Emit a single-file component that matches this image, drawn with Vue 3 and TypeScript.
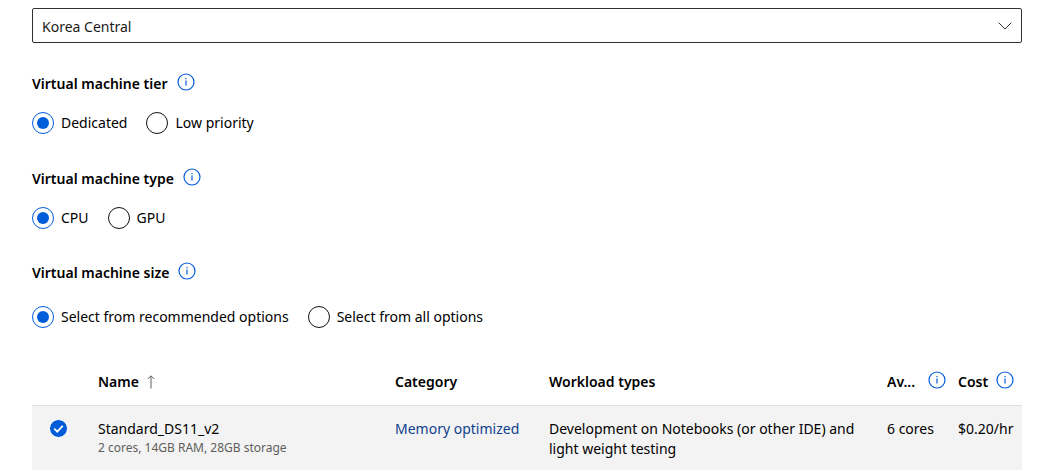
<script setup lang="ts">
import { ref } from 'vue'
import type { Ref } from 'vue'

interface RadioGroup {
  id: string
  label: string
  options: string[]
  selected: Ref<string>
}

interface VmSize {
  name: string
  specs: string
  category: string
  workload: string
  quota: string
  cost: string
}

const region = ref('Korea Central')

const groups: RadioGroup[] = [
  { id: 'tier', label: 'Virtual machine tier', options: ['Dedicated', 'Low priority'], selected: ref('Dedicated') },
  { id: 'type', label: 'Virtual machine type', options: ['CPU', 'GPU'], selected: ref('CPU') },
  {
    id: 'size',
    label: 'Virtual machine size',
    options: ['Select from recommended options', 'Select from all options'],
    selected: ref('Select from recommended options'),
  },
]

const sizes: VmSize[] = [
  {
    name: 'Standard_DS11_v2',
    specs: '2 cores, 14GB RAM, 28GB storage',
    category: 'Memory optimized',
    workload: 'Development on Notebooks (or other IDE) and light weight testing',
    quota: '6 cores',
    cost: '$0.20/hr',
  },
]

const checked = ref<string[]>(['Standard_DS11_v2'])
</script>

<template>
  <main class="page">
    <div class="dropdown">
      <select v-model="region" aria-label="Location">
        <option>Korea Central</option>
      </select>
      <svg class="chevron" viewBox="0 0 14 8" aria-hidden="true"><path d="M.7 .7 7 7 13.3 .7" /></svg>
    </div>

    <section
      v-for="group in groups"
      :key="group.id"
      class="group"
      :class="group.id"
      role="radiogroup"
      :aria-labelledby="`${group.id}-label`"
    >
      <div class="heading">
        <span :id="`${group.id}-label`">{{ group.label }}</span>
        <button type="button" class="info" :aria-label="`About ${group.label}`">
          <svg viewBox="0 0 18 18"><circle cx="9" cy="9" r="8" /><path d="M9 7.5v5M9 5v1.3" /></svg>
        </button>
      </div>
      <div class="options">
        <label v-for="option in group.options" :key="option">
          <input v-model="group.selected.value" type="radio" :name="group.id" :value="option" />
          <span>{{ option }}</span>
        </label>
      </div>
    </section>

    <table>
      <colgroup>
        <col class="c-check" />
        <col class="c-name" />
        <col class="c-category" />
        <col />
        <col class="c-quota" />
        <col class="c-cost" />
      </colgroup>
      <thead>
        <tr>
          <td></td>
          <th scope="col" aria-sort="ascending">
            <div class="th">
              <span>Name</span>
              <svg class="sort" viewBox="0 0 8 14" aria-hidden="true"><path d="M4 13.5V1M.8 4 4 .8 7.2 4" /></svg>
            </div>
          </th>
          <th scope="col">Category</th>
          <th scope="col">Workload types</th>
          <th scope="col">
            <div class="th spread">
              <span>Av...</span>
              <button type="button" class="info" aria-label="About available quota">
                <svg viewBox="0 0 18 18"><circle cx="9" cy="9" r="8" /><path d="M9 7.5v5M9 5v1.3" /></svg>
              </button>
            </div>
          </th>
          <th scope="col">
            <div class="th">
              <span>Cost</span>
              <button type="button" class="info" aria-label="About cost">
                <svg viewBox="0 0 18 18"><circle cx="9" cy="9" r="8" /><path d="M9 7.5v5M9 5v1.3" /></svg>
              </button>
            </div>
          </th>
        </tr>
      </thead>
      <tbody>
        <tr v-for="size in sizes" :key="size.name" :class="{ selected: checked.includes(size.name) }">
          <td>
            <label class="check">
              <input v-model="checked" type="checkbox" :value="size.name" :aria-label="size.name" />
              <svg viewBox="0 0 18 18" aria-hidden="true"><path d="M5 9.2 7.8 12 13 6.6" /></svg>
            </label>
          </td>
          <td>
            <div>{{ size.name }}</div>
            <div class="specs">{{ size.specs }}</div>
          </td>
          <td><a href="#">{{ size.category }}</a></td>
          <td>{{ size.workload }}</td>
          <td>{{ size.quota }}</td>
          <td>{{ size.cost }}</td>
        </tr>
      </tbody>
    </table>
  </main>
</template>

<style>
body {
  margin: 0;
  background: #fff;
}
</style>

<style scoped>
.page {
  box-sizing: border-box;
  padding: 8px 19px 5px 32px;
  font: 14px/20px "Noto Sans", "Open Sans", sans-serif;
  color: #000;
}

.dropdown {
  display: grid;
  align-items: center;
}

.dropdown > * {
  grid-area: 1 / 1;
}

select {
  appearance: none;
  box-sizing: border-box;
  width: 100%;
  height: 35px;
  margin: 0;
  padding: 2px 36px 0 9px;
  border: 1px solid #323130;
  border-radius: 2px;
  background: #fff;
  color: #1b1a19;
  font: inherit;
}

.chevron {
  justify-self: end;
  width: 14px;
  height: 8px;
  margin-right: 10px;
  pointer-events: none;
  fill: none;
  stroke: #323130;
}

.group {
  margin-top: 31px;
}

.group.type {
  margin-top: 35px;
}

.group.size {
  margin-top: 34px;
}

.heading {
  display: flex;
  align-items: center;
  gap: 9px;
  height: 20px;
  font-weight: 600;
}

.info {
  flex: none;
  width: 18px;
  height: 18px;
  margin: 0 0 4px;
  padding: 0;
  border: 0;
  background: none;
}

.info svg {
  display: block;
  width: 18px;
  height: 18px;
  fill: none;
  stroke: #015cda;
  stroke-width: 1.2;
}

.options {
  display: flex;
  gap: 19px;
  margin-top: 18px;
}

.size .options {
  margin-top: 23px;
}

.options label {
  display: flex;
  align-items: center;
  gap: 7px;
  height: 22px;
}

input[type="radio"] {
  appearance: none;
  display: grid;
  place-items: center;
  box-sizing: border-box;
  width: 22px;
  height: 22px;
  margin: 0;
  border: 1px solid #111;
  border-radius: 50%;
}

input[type="radio"]:checked {
  border-color: #015cda;
}

input[type="radio"]:checked::before {
  content: "";
  width: 12px;
  height: 12px;
  border-radius: 50%;
  background: #015cda;
}

table {
  width: 100%;
  margin-top: 31px;
  border-collapse: collapse;
  table-layout: fixed;
}

.c-check {
  width: 66px;
}

.c-name {
  width: 297px;
}

.c-category {
  width: 154px;
}

.c-quota {
  width: 71px;
}

.c-cost {
  width: 64px;
}

th,
td {
  padding: 0;
  text-align: left;
  vertical-align: top;
}

th {
  height: 46px;
  font-weight: 600;
  vertical-align: middle;
}

.th {
  display: flex;
  align-items: center;
  gap: 8px;
  height: 20px;
}

.spread {
  justify-content: space-between;
  padding-right: 12px;
}

.sort {
  width: 8px;
  height: 14px;
  fill: none;
  stroke: #605e5c;
}

tbody td {
  height: 51px;
  padding: 13px 0 0;
  border-top: 1px solid #e1e1e1;
}

tbody td:nth-child(4) {
  padding-right: 20px;
}

.selected {
  background: #f3f3f3;
}

.specs {
  font-size: 12px;
  line-height: 18px;
  color: #605e5c;
}

a {
  color: #103f8c;
  text-decoration: none;
}

.check {
  display: grid;
  width: 19px;
  margin-left: 17px;
}

.check > * {
  grid-area: 1 / 1;
  box-sizing: border-box;
  width: 19px;
  height: 19px;
}

.check input {
  appearance: none;
  margin: 0;
  border: 1px solid #605e5c;
  border-radius: 50%;
}

.check input:checked {
  border-color: #fff;
  background: #015cda;
}

.check svg {
  pointer-events: none;
  fill: none;
  stroke: #fff;
  stroke-width: 1.7;
}
</style>
